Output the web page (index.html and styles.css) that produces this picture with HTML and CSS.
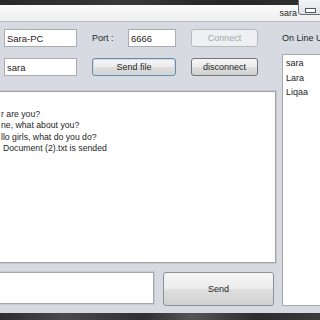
FILE: index.html
```html
<!DOCTYPE html>
<html lang="en">
<head>
    <meta charset="UTF-8">
    <meta name="viewport" content="width=device-width, initial-scale=1.0">
    <title>sara</title>
    <link rel="stylesheet" href="styles.css">
</head>
<body>
    <div class="screen">
        <div class="topbar"></div>
        <div class="titlebar"><span class="title">sara</span></div>
        <div class="minbtn"><span class="dash"></span></div>

        <div class="frame">
            <div class="leftcol">
                <div class="controls">
                    <input class="field" type="text" value="Sara-PC">
                    <div class="port">
                        <label for="port">Port :</label>
                        <input class="field port-field" id="port" type="text" value="6666">
                    </div>
                    <button class="button" disabled>Connect</button>
                    <input class="field" type="text" value="sara">
                    <button class="button focused">Send file</button>
                    <button class="button">disconnect</button>
                </div>

                <div class="chat">
                    <p>r are you?</p>
                    <p>ne, what about you?</p>
                    <p>llo girls, what do you do?</p>
                    <p class="cut">Document (2).txt is sended</p>
                </div>

                <div class="compose">
                    <div class="message"></div>
                    <button class="button send">Send</button>
                </div>
            </div>

            <div class="rightcol">
                <div class="users-label">On Line Users</div>
                <ul class="users">
                    <li>sara</li>
                    <li>Lara</li>
                    <li>Liqaa</li>
                </ul>
            </div>
        </div>

        <div class="taskbar"></div>
    </div>
</body>
</html>
```

FILE: styles.css
```css
body {
    margin: 0;
    font-family: "Liberation Sans", Arial, sans-serif;
    font-size: 9px;
    color: #1e1e1e;
}
.screen {
    position: relative;
    width: 320px;
    height: 320px;
    overflow: hidden;
    background-color: #d7dbe1;
}
.topbar {
    height: 5px;
    background: linear-gradient(90deg, #2a2a2a, #3a3838 40%, #262626 70%, #333 100%);
}
.titlebar {
    height: 16px;
    border-bottom: 1px solid #b9bdc3;
    background: linear-gradient(#fbfbfb, #eeeff1);
    display: flex;
    align-items: center;
    justify-content: flex-end;
    padding-right: 23px;
}
.title {
    font-size: 9px;
    color: #222;
}
.minbtn {
    position: absolute;
    top: -1px;
    left: 298px;
    width: 26px;
    height: 16px;
    border: 1px solid #6b6e72;
    border-radius: 0 0 0 3px;
    background: linear-gradient(#f3f4f6, #dfe2e6);
    box-sizing: border-box;
}
.dash {
    position: absolute;
    left: 6px;
    top: 8px;
    width: 9px;
    height: 3px;
    background-color: #fff;
    border: 1px solid #55585c;
}
.frame {
    display: grid;
    grid-template-columns: 276px 1fr;
    column-gap: 6px;
    height: 291px;
}
.leftcol {
    padding-top: 7px;
}
.controls {
    display: grid;
    grid-template-columns: 73px 84px 67px;
    grid-auto-rows: 18px;
    column-gap: 15px;
    row-gap: 11px;
    padding-left: 4px;
}
.field {
    box-sizing: border-box;
    height: 18px;
    margin: 0;
    padding: 0 2px;
    border: 1px solid #a9acb2;
    background-color: #fff;
    font-family: inherit;
    font-size: 9.5px;
    color: #1e1e1e;
    outline: none;
    width: 100%;
}
.port {
    display: flex;
    align-items: center;
}
.port label {
    flex: 1;
}
.port-field {
    width: 48px;
}
.button {
    box-sizing: border-box;
    margin: 0;
    padding: 0;
    border: 1px solid #727579;
    border-radius: 3px;
    background: linear-gradient(#f6f6f6, #ececec 48%, #dedede 52%, #d2d2d2);
    font-family: inherit;
    font-size: 9px;
    color: #1e1e1e;
}
.button.focused {
    border-color: #6d8aa3;
    box-shadow: inset 0 0 0 1px #c9dcec;
}
.button:disabled {
    border-color: #b7bbbf;
    background: #eef0f2;
    color: #a3a6aa;
}
.chat {
    box-sizing: border-box;
    height: 172px;
    width: 278px;
    margin: 15px 0 0 -2px;
    padding: 17px 0 0 2px;
    border: 1px solid #9fa3a8;
    box-shadow: 0 0 0 1px #c4c8cd;
    background-color: #fff;
    font-size: 8.7px;
}
.chat p {
    margin: 0;
    line-height: 11.3px;
}
.chat .cut {
    padding-left: 2px;
}
.compose {
    display: flex;
    align-items: flex-start;
    margin-top: 9px;
    margin-left: -2px;
}
.message {
    box-sizing: border-box;
    width: 156px;
    height: 32px;
    border: 1px solid #a4a8ad;
    box-shadow: 0 0 0 1px #c6cacf;
    background-color: #fff;
}
.send {
    width: 111px;
    height: 34px;
    margin-left: 9px;
    border-color: #8d9094;
}
.users-label {
    padding-top: 10px;
    line-height: 12px;
    white-space: nowrap;
}
.users {
    list-style-type: none;
    box-sizing: border-box;
    margin: 10px 0 0;
    padding: 1px 0 0 3px;
    height: 252px;
    width: 60px;
    border: 1px solid #a4a8ad;
    background-color: #fff;
}
.users li {
    line-height: 14.5px;
}
.taskbar {
    height: 7px;
    background: linear-gradient(90deg, #2e2e2e, #4a4a4a 20%, #2f2f2f 45%, #555 60%, #2c2c2c 80%, #3a3a3a);
}
```
